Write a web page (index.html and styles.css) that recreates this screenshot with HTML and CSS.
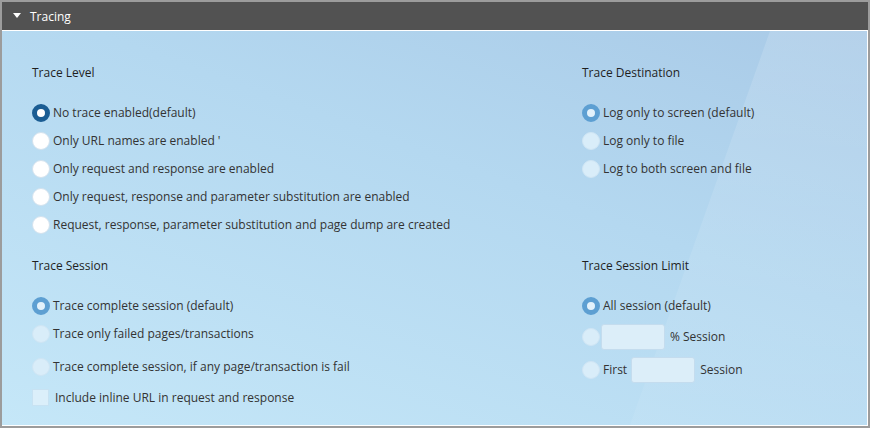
FILE: index.html
```html
<!DOCTYPE html>
<html>
<head>
<meta charset="utf-8">
<link rel="stylesheet" href="styles.css">
</head>
<body>
<div class="panel">
  <div class="panel-header">
    <span class="caret"></span>
    <span class="title">Tracing</span>
  </div>
  <div class="panel-body">
    <div class="grid">
      <section class="group">
        <h3 class="group-title">Trace Level</h3>
        <ul class="options">
          <li class="opt"><span class="radio on"></span><span class="lbl">No trace enabled(default)</span></li>
          <li class="opt"><span class="radio"></span><span class="lbl">Only URL names are enabled '</span></li>
          <li class="opt"><span class="radio"></span><span class="lbl">Only request and response are enabled</span></li>
          <li class="opt"><span class="radio"></span><span class="lbl">Only request, response and parameter substitution are enabled</span></li>
          <li class="opt"><span class="radio"></span><span class="lbl">Request, response, parameter substitution and page dump are created</span></li>
        </ul>
      </section>
      <section class="group">
        <h3 class="group-title">Trace Destination</h3>
        <ul class="options">
          <li class="opt"><span class="radio dis on"></span><span class="lbl">Log only to screen (default)</span></li>
          <li class="opt"><span class="radio dis"></span><span class="lbl">Log only to file</span></li>
          <li class="opt"><span class="radio dis"></span><span class="lbl">Log to both screen and file</span></li>
        </ul>
      </section>
      <section class="group">
        <h3 class="group-title">Trace Session</h3>
        <ul class="options">
          <li class="opt"><span class="radio dis on"></span><span class="lbl">Trace complete session (default)</span></li>
          <li class="opt"><span class="radio dis"></span><span class="lbl">Trace only failed pages/transactions</span></li>
          <li class="opt opt-tall"><span class="radio dis"></span><span class="lbl">Trace complete session, if any page/transaction is fail</span></li>
          <li class="opt opt-check"><span class="checkbox"></span><span class="lbl lbl-check">Include inline URL in request and response</span></li>
        </ul>
      </section>
      <section class="group">
        <h3 class="group-title">Trace Session Limit</h3>
        <ul class="options">
          <li class="opt"><span class="radio dis on"></span><span class="lbl">All session (default)</span></li>
          <li class="opt opt-input"><span class="radio dis"></span><span class="field field-first"></span><span class="lbl lbl-after">% Session</span></li>
          <li class="opt opt-input"><span class="radio dis"></span><span class="lbl">First</span><span class="field"></span><span class="lbl lbl-after">Session</span></li>
        </ul>
      </section>
    </div>
  </div>
</div>
</body>
</html>
```

FILE: styles.css
```css
* { box-sizing: border-box; }
html, body { margin: 0; padding: 0; }
body {
  width: 870px;
  height: 428px;
  font-family: "Open Sans", "Liberation Sans", sans-serif;
  font-size: 12px;
  color: #333;
  background: #fff;
}
.panel {
  width: 870px;
  height: 428px;
  border: 2px solid #9c9c9c;
  display: flex;
  flex-direction: column;
}
.panel-header {
  height: 28px;
  background: #525252;
  display: flex;
  align-items: center;
  padding-left: 11px;
  color: #fff;
}
.caret {
  width: 0;
  height: 0;
  border-left: 4px solid transparent;
  border-right: 4px solid transparent;
  border-top: 5px solid #fff;
  margin-right: 9px;
  margin-top: -2px;
}
.title {
  font-size: 12px;
  line-height: 16px;
  margin-top: 1px;
}
.panel-body {
  flex: 1;
  position: relative;
  border-top: 1px solid #fff;
  border-right: 1px solid #fff;
  border-bottom: 1px solid #fff;
  background: linear-gradient(200deg, #a9cae7 0%, #b4d8f0 40%, #c5e7f8 100%);
  padding: 34px 0 0 30px;
  overflow: hidden;
}
.panel-body::before {
  content: "";
  position: absolute;
  inset: 0;
  background: linear-gradient(180deg, rgba(255,255,255,0.14), rgba(255,255,255,0.06));
  clip-path: polygon(768px 0, 100% 0, 100% 100%, 628px 100%);
}
.grid {
  position: relative;
  display: grid;
  grid-template-columns: 550px 1fr;
  row-gap: 19px;
}
.group-title {
  margin: 0 0 18px 0;
  font-size: 12px;
  line-height: 16px;
  font-weight: 400;
  color: #1f1f1f;
}
.options {
  list-style: none;
  margin: 0;
  padding: 0;
}
.opt {
  height: 28px;
  display: flex;
  align-items: center;
}
.opt-tall { height: 33px; margin-top: 2px; margin-bottom: -2px; }
.opt-check { height: 31px; margin-top: 1px; }
.opt-input { height: 33px; }
.radio {
  width: 18px;
  height: 18px;
  border-radius: 50%;
  background: #fff;
  border: 1px solid #d3e2ee;
  flex: none;
}
.radio.on {
  border: 5px solid #1b5d93;
  background: #fff;
}
.radio.dis {
  background: #d9edf9;
  border-color: #cfe5f4;
}
.radio.dis.on {
  border: 5px solid #5d9fd2;
  background: #e2f1fb;
}
.lbl {
  margin-left: 3px;
  line-height: 16px;
  white-space: nowrap;
}
.lbl-after { margin-left: 5px; }
.checkbox {
  width: 17px;
  height: 17px;
  background: #dbeffa;
  border: 1px solid #c8e2f2;
  flex: none;
}
.lbl-check { margin-left: 6px; }
.field {
  width: 64px;
  height: 26px;
  border: 1px solid #c4dcee;
  border-radius: 3px;
  background: #dceef9;
  margin-left: 4px;
  flex: none;
}
.field-first { margin-left: 1px; }
```
